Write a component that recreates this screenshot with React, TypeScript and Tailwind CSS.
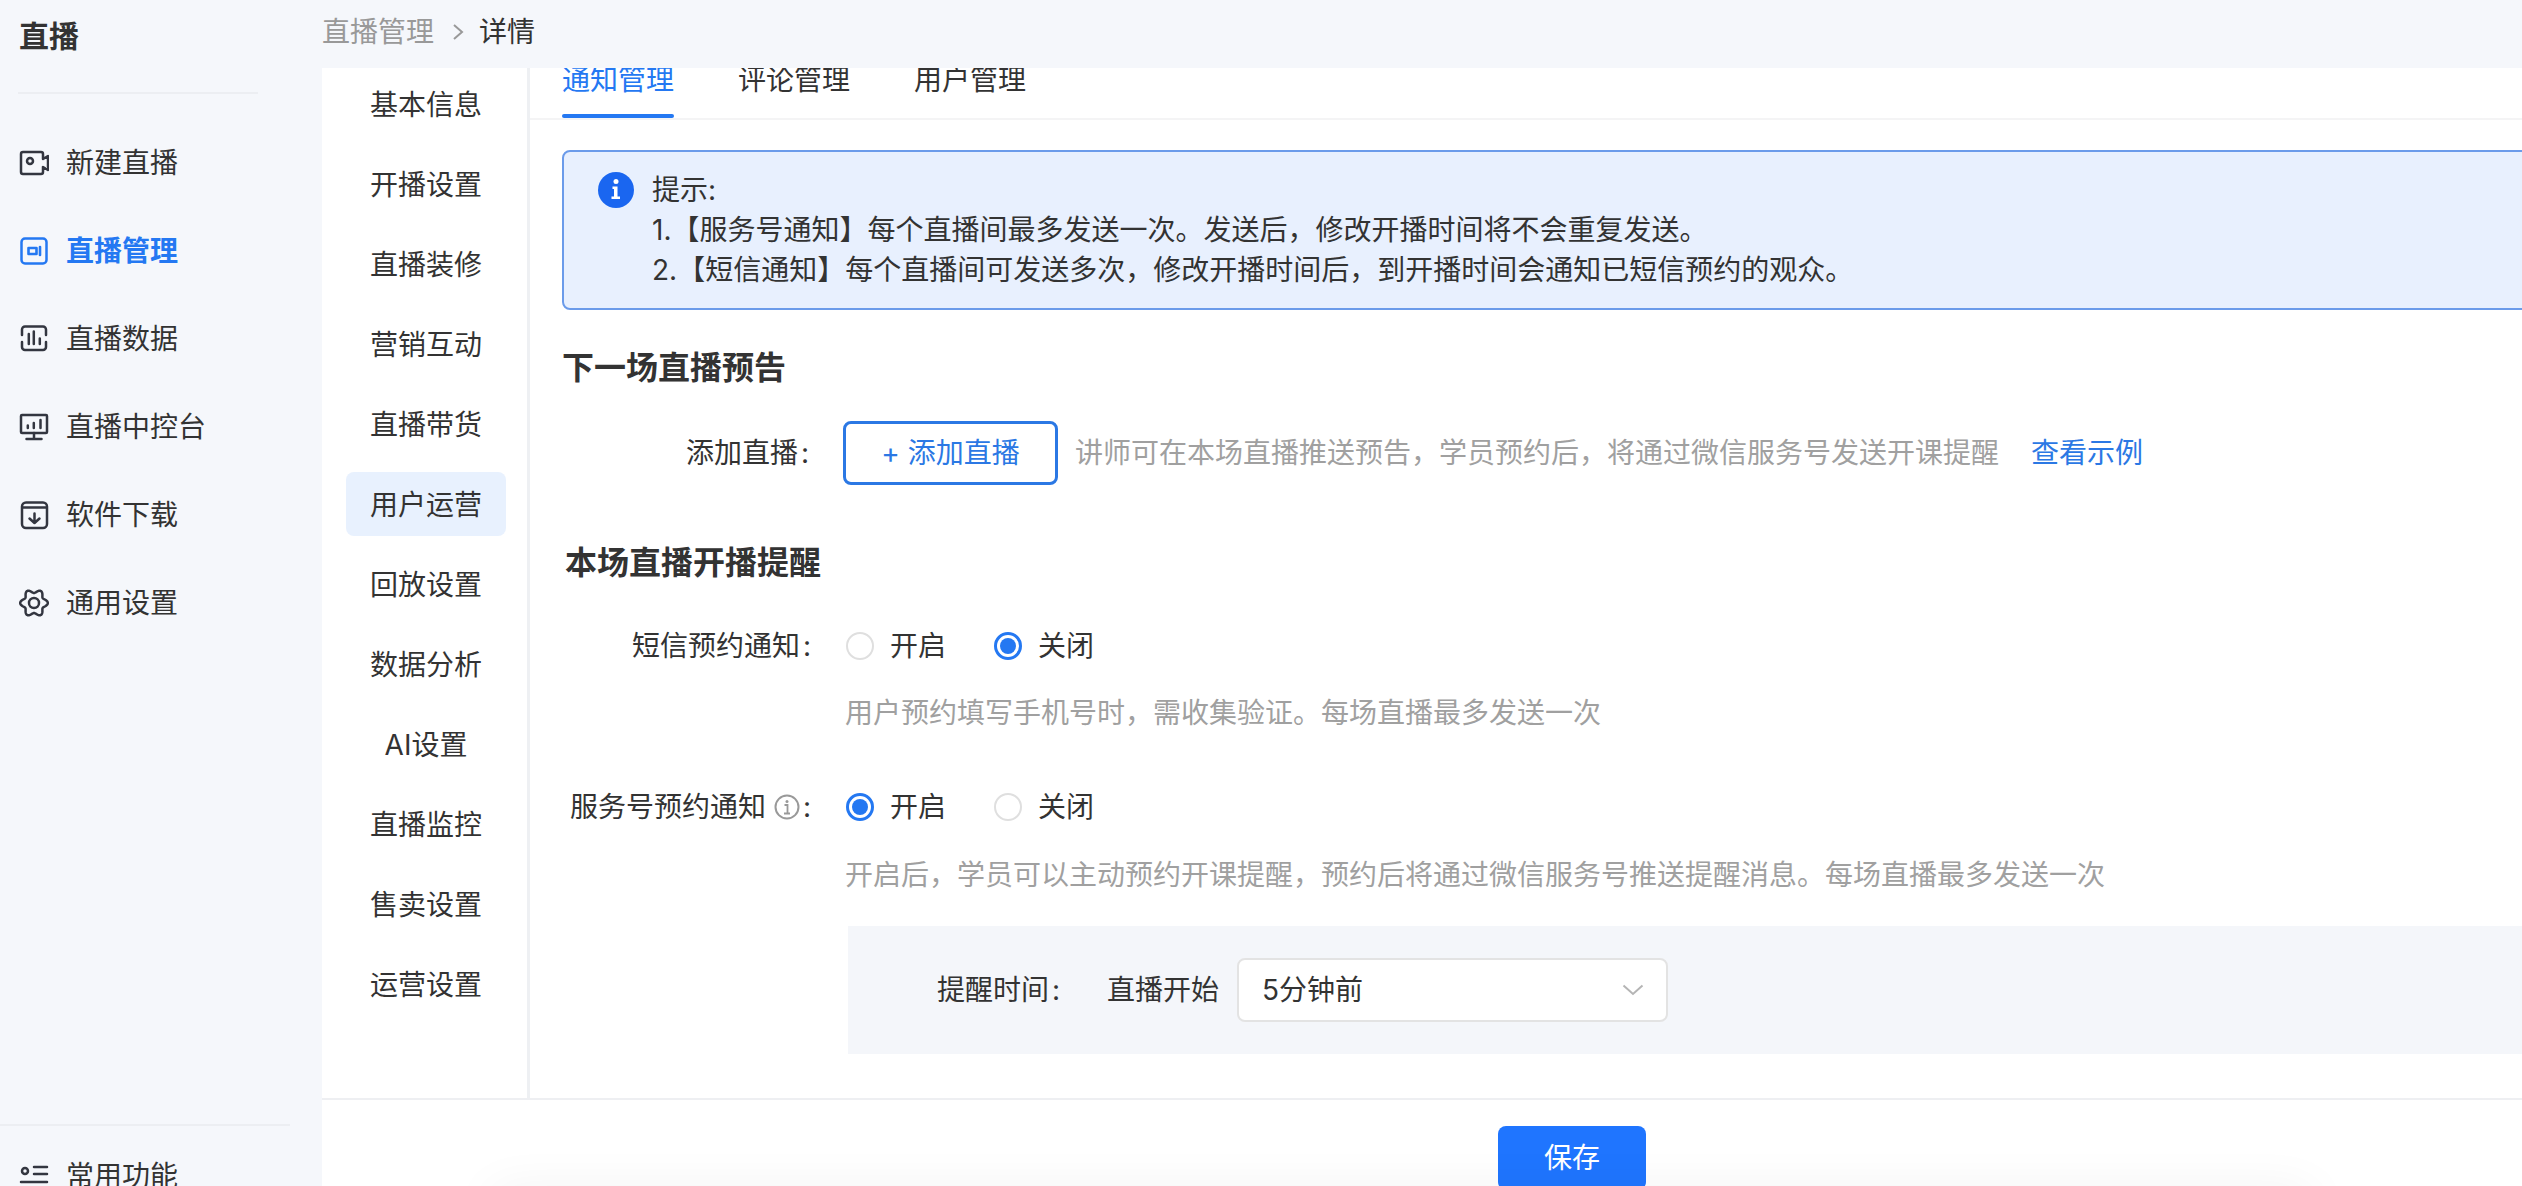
import React from "react";

const gearPath = (() => {
  const pts: string[] = [];
  for (let i = 0; i < 120; i++) {
    const t = (i / 120) * Math.PI * 2;
    const r = 11.9 + 1.9 * Math.cos(6 * t);
    pts.push(`${(15 + r * Math.cos(t)).toFixed(2)} ${(15 + r * Math.sin(t)).toFixed(2)}`);
  }
  return "M" + pts.join("L") + "Z";
})();

const Ico = ({ children, color = "#333640" }: { children: React.ReactNode; color?: string }) => (
  <svg width="30" height="30" viewBox="0 0 30 30" fill="none" stroke={color} strokeWidth="2.5" strokeLinecap="round" strokeLinejoin="round" className="shrink-0">
    {children}
  </svg>
);

const navItems: { label: string; active?: boolean; icon: React.ReactNode }[] = [
  {
    label: "新建直播",
    icon: (
      <Ico>
        <path d="M4 4h18a2 2 0 0 1 2 2v5l5-3v14l-5-3v5a2 2 0 0 1-2 2H4a2 2 0 0 1-2-2V6a2 2 0 0 1 2-2Z" />
        <circle cx="11" cy="13" r="3" />
      </Ico>
    ),
  },
  {
    label: "直播管理",
    active: true,
    icon: (
      <Ico color="#2478f2">
        <rect x="2.500" y="2.500" width="25" height="25" rx="3.500" />
        <rect x="9.500" y="12" width="8" height="6" strokeWidth="2.600" />
        <path d="M21 11v8" strokeWidth="2.600" />
      </Ico>
    ),
  },
  {
    label: "直播数据",
    icon: (
      <Ico>
        <path d="M3 11V5.500a3 3 0 0 1 3-3h18a3 3 0 0 1 3 3V11M3 18v5a3 3 0 0 0 3 3h18a3 3 0 0 0 3-3v-5" />
        <path d="M9.800 10v10M14.800 7.500v12.500M20.800 14.500v5.500" />
      </Ico>
    ),
  },
  {
    label: "直播中控台",
    icon: (
      <Ico>
        <rect x="2" y="3" width="26" height="18" rx="1" />
        <path d="M15 21v6M7.500 27h15" />
        <path d="M8.800 13.500v2.500M14.800 11v5M21.500 8v8" />
      </Ico>
    ),
  },
  {
    label: "软件下载",
    icon: (
      <Ico>
        <rect x="3" y="2.500" width="25" height="25.500" rx="4" />
        <path d="M3.500 7.500h24" />
        <path d="M15.500 13.500v9.500M10.500 18.500l5 4.500 5-4.500" />
      </Ico>
    ),
  },
  {
    label: "通用设置",
    icon: (
      <Ico>
        <path d={gearPath} />
        <circle cx="15" cy="15" r="5" />
      </Ico>
    ),
  },
];

const subNav = ["基本信息", "开播设置", "直播装修", "营销互动", "直播带货", "用户运营", "回放设置", "数据分析", "AI设置", "直播监控", "售卖设置", "运营设置"];

const Radio = ({ checked, label }: { checked?: boolean; label: string }) => (
  <div className="flex items-center gap-[16px]">
    {checked ? (
      <span className="flex h-[28px] w-[28px] items-center justify-center rounded-full border-[3px] border-[#2478f2] bg-white">
        <span className="h-[16px] w-[16px] rounded-full bg-[#2478f2]" />
      </span>
    ) : (
      <span className="h-[28px] w-[28px] rounded-full border-2 border-[#dfdfdf] bg-white" />
    )}
    <span>{label}</span>
  </div>
);

const Colon = () => <span className="ml-[3px] w-[8px] text-center">:</span>;

export default function App() {
  return (
    <div className="flex h-screen w-full overflow-hidden bg-[#f5f7fb] font-['Inter','Noto_Sans_CJK_SC',sans-serif] text-[28px] leading-[40px] text-[#333]">
      {/* sidebar */}
      <aside className="flex w-[322px] shrink-0 flex-col">
        <div className="flex h-[72px] items-center pl-[19px] text-[30px] font-semibold text-[#333]">直播</div>
        <div className="ml-[18px] mt-[20px] h-[2px] w-[240px] bg-[#eceef2]" />
        <nav className="mt-[25px] flex flex-col">
          {navItems.map((n) => (
            <div key={n.label} className={`flex h-[88px] items-center gap-[17px] pl-[19px] ${n.active ? "font-semibold text-[#2478f2]" : "text-[#333]"}`}>
              {n.icon}
              <span>{n.label}</span>
            </div>
          ))}
        </nav>
        <div className="mt-auto h-[62px] w-[290px] shrink-0 overflow-hidden border-t-2 border-[#eceef2]">
          <div className="mt-[6px] flex h-[88px] items-center gap-[17px] pl-[19px]">
            <Ico>
              <circle cx="6" cy="10" r="3" />
              <path d="M15 6h13M15 13h13M2 21h26" />
            </Ico>
            <span>常用功能</span>
          </div>
        </div>
      </aside>

      {/* right */}
      <div className="relative flex min-w-0 flex-1 flex-col">
        <header className="flex h-[68px] shrink-0 items-center pb-[4px]">
          <span className="text-[#999]">直播管理</span>
          <svg width="12" height="18" viewBox="0 0 12 18" fill="none" stroke="#999" strokeWidth="2" className="ml-[18px] mr-[15px]">
            <path d="M2 2l8 7-8 7" />
          </svg>
          <span>详情</span>
        </header>

        <div className="flex h-[1030px] shrink-0 bg-white">
          <div className="flex w-[208px] shrink-0 flex-col overflow-hidden border-r-[3px] border-[#eef0f3] pl-[24px] pt-[4px]">
            {subNav.map((s) => (
              <div key={s} className={`mb-[16px] flex h-[64px] w-[160px] shrink-0 items-center justify-center rounded-[8px] pt-[2px] ${s === "用户运营" ? "bg-[#e8f1fe]" : ""}`}>
                {s}
              </div>
            ))}
          </div>

          <main className="min-w-0 flex-1 overflow-hidden pl-[32px]">
            {/* tabs */}
            <div className="-ml-[32px] flex h-[52px] gap-[64px] border-b-2 border-[#f4f4f5] pl-[32px]">
              {["通知管理", "评论管理", "用户管理"].map((t, i) => (
                <div key={t} className={`relative -mt-[8px] h-[58px] w-[112px] text-center ${i === 0 ? "text-[#2478f2]" : ""}`}>
                  {t}
                  {i === 0 && <span className="absolute bottom-0 left-0 h-[4px] w-full rounded-full bg-[#2478f2]" />}
                </div>
              ))}
            </div>

            {/* alert */}
            <div className="-mr-[10px] mt-[30px] flex h-[160px] gap-[18px] rounded-[8px] border-2 border-[#6b9bea] bg-[#e8f0fe] pl-[34px] pt-[18px]">
              <svg width="36" height="36" viewBox="0 0 36 36" className="mt-[2px] shrink-0">
                <circle cx="18" cy="18" r="18" fill="#1a66f0" />
                <circle cx="18" cy="9.500" r="2.500" fill="#fff" />
                <path d="M14.500 14.500h5v10h2.500v2.500h-8.500v-2.500h2.500v-7.500h-1.500z" fill="#fff" />
              </svg>
              <div>
                <div>提示:</div>
                <div>1.【服务号通知】每个直播间最多发送一次。发送后，修改开播时间将不会重复发送。</div>
                <div>2.【短信通知】每个直播间可发送多次，修改开播时间后，到开播时间会通知已短信预约的观众。</div>
              </div>
            </div>

            <h2 className="mt-[36px] text-[32px] font-semibold leading-[44px]">下一场直播预告</h2>

            <div className="mt-[31px] flex h-[64px] items-center">
              <div className="flex w-[247px] justify-end">
                <span>添加直播</span>
                <Colon />
              </div>
              <button className="ml-[34px] flex h-[64px] w-[215px] items-center justify-center rounded-[8px] border-[3px] border-[#2b78e4] text-[#2b78e4]">+ 添加直播</button>
              <span className="ml-[17px] text-[#a0a0a0]">讲师可在本场直播推送预告，学员预约后，将通过微信服务号发送开课提醒</span>
              <span className="ml-[32px] text-[#2b78e4]">查看示例</span>
            </div>

            <div className="ml-[3px]">
              <h2 className="mt-[56px] text-[32px] font-semibold leading-[44px]">本场直播开播提醒</h2>

              <div className="mt-[41px] flex h-[40px] items-center">
                <div className="flex w-[246px] justify-end">
                  <span>短信预约通知</span>
                  <Colon />
                </div>
                <div className="ml-[35px] flex gap-[48px]">
                  <Radio label="开启" />
                  <Radio checked label="关闭" />
                </div>
              </div>
              <div className="ml-[280px] mt-[27px] text-[#a0a0a0]">用户预约填写手机号时，需收集验证。每场直播最多发送一次</div>

              <div className="mt-[54px] flex h-[40px] items-center">
                <div className="flex w-[246px] items-center justify-end">
                  <span>服务号预约通知</span>
                  <svg width="26" height="26" viewBox="0 0 26 26" fill="none" className="ml-[8px]">
                    <circle cx="13" cy="13" r="11.500" stroke="#999" strokeWidth="2" />
                    <circle cx="13" cy="7.500" r="1.500" fill="#999" />
                    <path d="M10.500 11h3v8M10 19.500h6" stroke="#999" strokeWidth="1.800" />
                  </svg>
                  <Colon />
                </div>
                <div className="ml-[35px] flex gap-[48px]">
                  <Radio checked label="开启" />
                  <Radio label="关闭" />
                </div>
              </div>
              <div className="ml-[280px] mt-[28px] text-[#a0a0a0]">开启后，学员可以主动预约开课提醒，预约后将通过微信服务号推送提醒消息。每场直播最多发送一次</div>

              <div className="ml-[283px] mt-[31px] flex h-[128px] items-center bg-[#f4f6fa] pl-[89px]">
                <span>提醒时间</span>
                <Colon />
                <span className="ml-[47px]">直播开始</span>
                <div className="ml-[18px] flex h-[64px] w-[431px] items-center justify-between rounded-[8px] border-2 border-[#e3e3e3] bg-white pl-[23px] pr-[22px]">
                  <span>5分钟前</span>
                  <svg width="22" height="12" viewBox="0 0 22 12" fill="none" stroke="#b5b5b5" strokeWidth="2">
                    <path d="M1.500 1.500L11 10l9.500-8.500" />
                  </svg>
                </div>
              </div>
            </div>
          </main>
        </div>

        <div className="flex flex-1 flex-col overflow-hidden border-t-2 border-[#eeeff2] bg-white pl-[1176px] pt-[26px]">
          <button className="h-[64px] w-[148px] shrink-0 rounded-[8px] bg-[#1f75ff] text-white">保存</button>
        </div>
        <div className="pointer-events-none absolute left-[170px] top-[1190px] h-[40px] w-[1820px] shadow-[0_0_50px_rgba(0,0,0,0.06)]" />
      </div>
    </div>
  );
}
